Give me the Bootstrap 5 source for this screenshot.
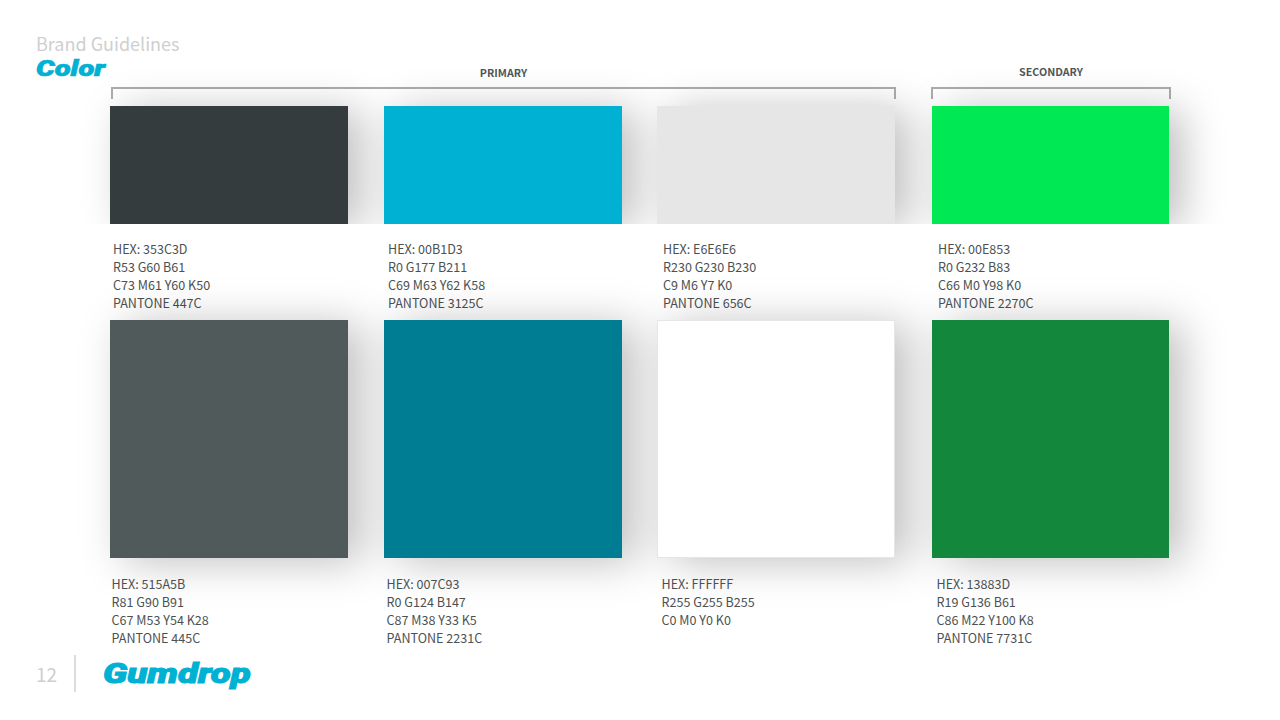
<!DOCTYPE html>
<html lang="en">
<head>
<meta charset="utf-8">
<title>Brand Guidelines - Color</title>
<link href="https://cdn.jsdelivr.net/npm/bootstrap@5.3.0/dist/css/bootstrap.min.css" rel="stylesheet">
<style>
html,body{height:720px;overflow:hidden;background:#fff}
body{font-family:"Noto Sans CJK JP","Source Sans Pro","Noto Sans",sans-serif;color:#4b5152;font-size:12.55px}
.sheet{width:1280px;height:720px;padding:31px 0 0 36px}
.doc-title{font-size:18px;line-height:24px;color:#cfcfcf;height:27px}
.logo-word{font-family:Roboto,"DejaVu Sans",sans-serif;font-weight:900;font-style:italic;color:#00b1d3;transform-origin:left center;white-space:nowrap}
.sec-word{font-size:22px;line-height:22px;width:75px;height:24px;transform:scaleX(1.33);-webkit-text-stroke:.7px #00b1d3}
.brackets{width:1060px}
.brk-primary{width:785px;margin-right:35px}
.brk-secondary{width:240px}
.brk-label{font-size:10.7px;font-weight:700;line-height:14px;text-align:center;color:#50575a;height:21px;padding-top:8px;box-sizing:content-box}
.brk-secondary .brk-label{padding-top:7px;height:22px}
.brk-line{height:12px;border:solid #adadad;border-width:2px 2px 0 2px}
.swatch-row{margin-left:74px;margin-top:7px;display:grid;grid-template-columns:274px 273px 275px 238px}
.swatch{width:238px}
.swatch:last-child{width:237px}
.tile-short{height:118px;box-shadow:14px 4px 40px rgba(0,0,0,.25);clip-path:inset(-60px -70px 0 -60px)}
.tile-tall{height:238px;box-shadow:14px 4px 40px rgba(0,0,0,.25)}
.fill-353c3d{background:#353c3d}
.fill-00b1d3{background:#00b1d3}
.fill-e6e6e6{background:#e6e6e6}
.fill-00e853{background:#00e853}
.fill-515a5b{background:#515a5b}
.fill-007c93{background:#007c93}
.fill-ffffff{background:#fff;border:1.5px solid #e6e6e6}
.fill-13883d{background:#13883d}
.spec-row{display:grid;grid-template-columns:repeat(4,275px);line-height:18px;height:72px}
.spec-a{margin:16px 0 8px 77px}
.spec-b{margin:17px 0 0 75.6px}
.foot{margin-top:8px}
.page-no{font-size:19px;line-height:24px;color:#cfcfcf;width:38px}
.foot-rule{width:2px;height:37px;background:#dcdcdc}
.foot-logo{font-size:28px;line-height:30px;margin-left:27px;transform:scaleX(1.31);-webkit-text-stroke:1px #00b1d3}
</style>
</head>
<body>
<div class="sheet">
  <div class="doc-title">Brand Guidelines</div>
  <div class="d-flex">
    <div class="logo-word sec-word">Color</div>
    <div class="brackets d-flex">
      <div class="brk-primary"><div class="brk-label">PRIMARY</div><div class="brk-line"></div></div>
      <div class="brk-secondary"><div class="brk-label">SECONDARY</div><div class="brk-line"></div></div>
    </div>
  </div>
  <div class="swatch-row">
    <div class="swatch tile-short fill-353c3d"></div>
    <div class="swatch tile-short fill-00b1d3"></div>
    <div class="swatch tile-short fill-e6e6e6"></div>
    <div class="swatch tile-short fill-00e853"></div>
  </div>
  <div class="spec-row spec-a">
    <div>HEX: 353C3D<br>R53 G60 B61<br>C73 M61 Y60 K50<br>PANTONE 447C</div>
    <div>HEX: 00B1D3<br>R0 G177 B211<br>C69 M63 Y62 K58<br>PANTONE 3125C</div>
    <div>HEX: E6E6E6<br>R230 G230 B230<br>C9 M6 Y7 K0<br>PANTONE 656C</div>
    <div>HEX: 00E853<br>R0 G232 B83<br>C66 M0 Y98 K0<br>PANTONE 2270C</div>
  </div>
  <div class="swatch-row mt-0">
    <div class="swatch tile-tall fill-515a5b"></div>
    <div class="swatch tile-tall fill-007c93"></div>
    <div class="swatch tile-tall fill-ffffff"></div>
    <div class="swatch tile-tall fill-13883d"></div>
  </div>
  <div class="spec-row spec-b">
    <div>HEX: 515A5B<br>R81 G90 B91<br>C67 M53 Y54 K28<br>PANTONE 445C</div>
    <div>HEX: 007C93<br>R0 G124 B147<br>C87 M38 Y33 K5<br>PANTONE 2231C</div>
    <div>HEX: FFFFFF<br>R255 G255 B255<br>C0 M0 Y0 K0</div>
    <div>HEX: 13883D<br>R19 G136 B61<br>C86 M22 Y100 K8<br>PANTONE 7731C</div>
  </div>
  <div class="foot d-flex align-items-center">
    <div class="page-no">12</div>
    <div class="foot-rule"></div>
    <div class="logo-word foot-logo">Gumdrop</div>
  </div>
</div>
<script src="https://cdn.jsdelivr.net/npm/bootstrap@5.3.0/dist/js/bootstrap.bundle.min.js"></script>
</body>
</html>
